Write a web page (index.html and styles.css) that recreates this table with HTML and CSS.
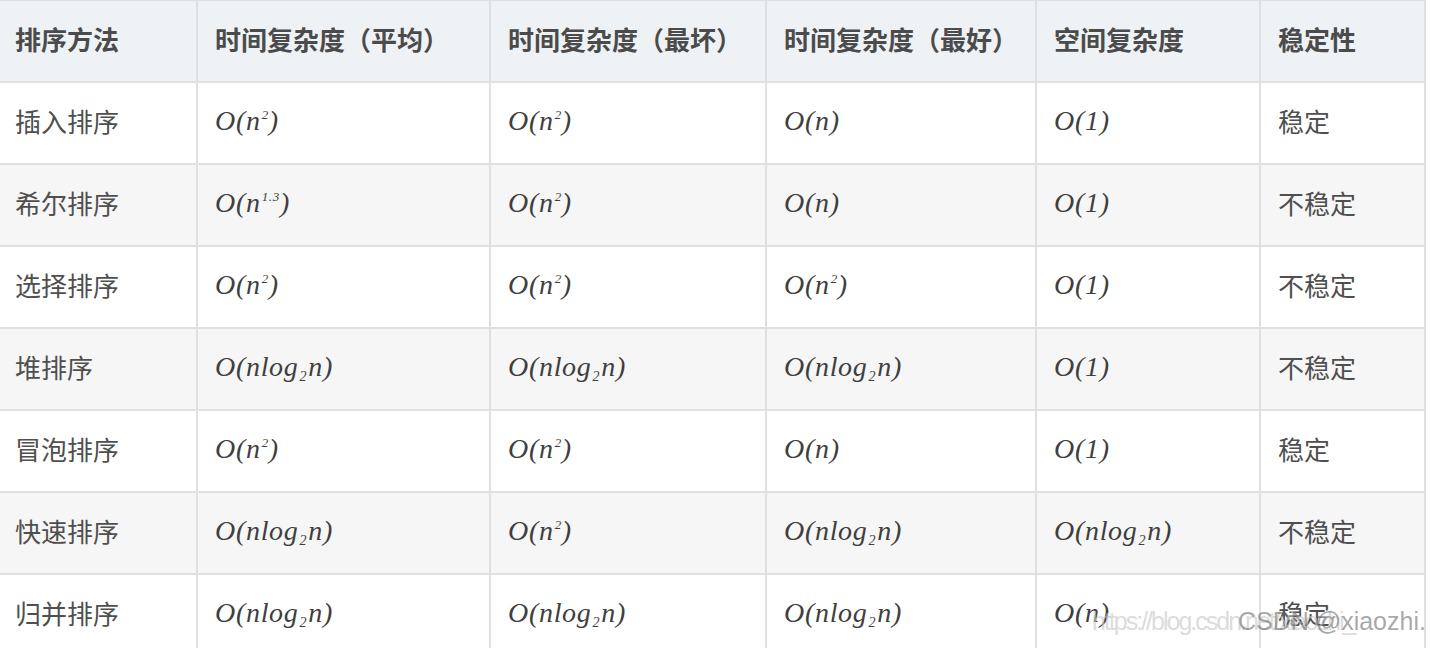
FILE: index.html
```html
<!DOCTYPE html>
<html lang="zh">
<head>
<meta charset="utf-8">
<title>排序算法复杂度</title>
<link rel="stylesheet" href="styles.css">
</head>
<body>
<div class="page">
  <table class="sort-table">
    <colgroup>
      <col class="c1"><col class="c2"><col class="c3"><col class="c4"><col class="c5"><col class="c6">
    </colgroup>
    <thead>
      <tr>
        <th>排序方法</th>
        <th>时间复杂度（平均）</th>
        <th>时间复杂度（最坏）</th>
        <th>时间复杂度（最好）</th>
        <th>空间复杂度</th>
        <th>稳定性</th>
      </tr>
    </thead>
    <tbody>
      <tr>
        <td>插入排序</td>
        <td><span class="m">O(n<sup>2</sup>)</span></td>
        <td><span class="m">O(n<sup>2</sup>)</span></td>
        <td><span class="m">O(n)</span></td>
        <td><span class="m">O(1)</span></td>
        <td>稳定</td>
      </tr>
      <tr>
        <td>希尔排序</td>
        <td><span class="m">O(n<sup>1.3</sup>)</span></td>
        <td><span class="m">O(n<sup>2</sup>)</span></td>
        <td><span class="m">O(n)</span></td>
        <td><span class="m">O(1)</span></td>
        <td>不稳定</td>
      </tr>
      <tr>
        <td>选择排序</td>
        <td><span class="m">O(n<sup>2</sup>)</span></td>
        <td><span class="m">O(n<sup>2</sup>)</span></td>
        <td><span class="m">O(n<sup>2</sup>)</span></td>
        <td><span class="m">O(1)</span></td>
        <td>不稳定</td>
      </tr>
      <tr>
        <td>堆排序</td>
        <td><span class="m">O(nlog<sub>2</sub>n)</span></td>
        <td><span class="m">O(nlog<sub>2</sub>n)</span></td>
        <td><span class="m">O(nlog<sub>2</sub>n)</span></td>
        <td><span class="m">O(1)</span></td>
        <td>不稳定</td>
      </tr>
      <tr>
        <td>冒泡排序</td>
        <td><span class="m">O(n<sup>2</sup>)</span></td>
        <td><span class="m">O(n<sup>2</sup>)</span></td>
        <td><span class="m">O(n)</span></td>
        <td><span class="m">O(1)</span></td>
        <td>稳定</td>
      </tr>
      <tr>
        <td>快速排序</td>
        <td><span class="m">O(nlog<sub>2</sub>n)</span></td>
        <td><span class="m">O(n<sup>2</sup>)</span></td>
        <td><span class="m">O(nlog<sub>2</sub>n)</span></td>
        <td><span class="m">O(nlog<sub>2</sub>n)</span></td>
        <td>不稳定</td>
      </tr>
      <tr>
        <td>归并排序</td>
        <td><span class="m">O(nlog<sub>2</sub>n)</span></td>
        <td><span class="m">O(nlog<sub>2</sub>n)</span></td>
        <td><span class="m">O(nlog<sub>2</sub>n)</span></td>
        <td><span class="m">O(n)</span></td>
        <td>稳定</td>
      </tr>
    </tbody>
  </table>
  <div class="watermark">
    <span class="wm-url">https://blog.csdn.net/xiaozhi_</span>
    <span class="wm-name">CSDN @xiaozhi.</span>
  </div>
</div>
</body>
</html>
```

FILE: styles.css
```css
html, body {
  margin: 0;
  padding: 0;
  background: #ffffff;
  overflow: hidden;
}

.page {
  position: relative;
  width: 1430px;
  height: 648px;
  overflow: hidden;
}

.sort-table {
  border-collapse: collapse;
  table-layout: fixed;
  width: 1428px;
  margin-left: -4px;
  margin-top: -1px;
  font-family: "Noto Sans CJK SC", "Noto Sans", sans-serif;
  font-size: 26px;
  color: #4f4f4f;
}

.c1 { width: 200px; }
.c2 { width: 293px; }
.c3 { width: 276px; }
.c4 { width: 270px; }
.c5 { width: 224px; }
.c6 { width: 165px; }

.sort-table th,
.sort-table td {
  border: 2px solid #e0e0e0;
  padding: 0 0 5px 17px;
  height: 75px;
  text-align: left;
  vertical-align: middle;
  white-space: nowrap;
  line-height: 1;
}

.sort-table tr > :first-child {
  padding-left: 17px;
  border-left-color: transparent;
}

.sort-table th {
  background: #eff2f5;
  font-weight: 700;
  color: #4b4b4b;
}

.sort-table tbody tr:nth-child(even) td {
  background: #f6f6f6;
}

.m {
  font-family: "Liberation Serif", "DejaVu Serif", serif;
  font-style: italic;
  font-size: 28px;
  letter-spacing: 0.7px;
  color: #3f3f3f;
}

.m sup {
  font-size: 13px;
  vertical-align: 0;
  position: relative;
  top: -11px;
  margin-left: 1px;
}

.m sub {
  font-size: 14px;
  vertical-align: 0;
  position: relative;
  top: 5px;
  margin: 0 1px;
}

.watermark {
  position: absolute;
  left: 1092px;
  top: 606px;
  white-space: nowrap;
  font-family: "Liberation Sans", Arial, sans-serif;
  font-size: 25px;
  line-height: 30px;
}

.wm-url {
  letter-spacing: -2px;
  color: rgba(200, 200, 200, 0.65);
}

.wm-name {
  position: absolute;
  left: 146px;
  top: 0;
  color: rgba(110, 110, 110, 0.6);
}
```
